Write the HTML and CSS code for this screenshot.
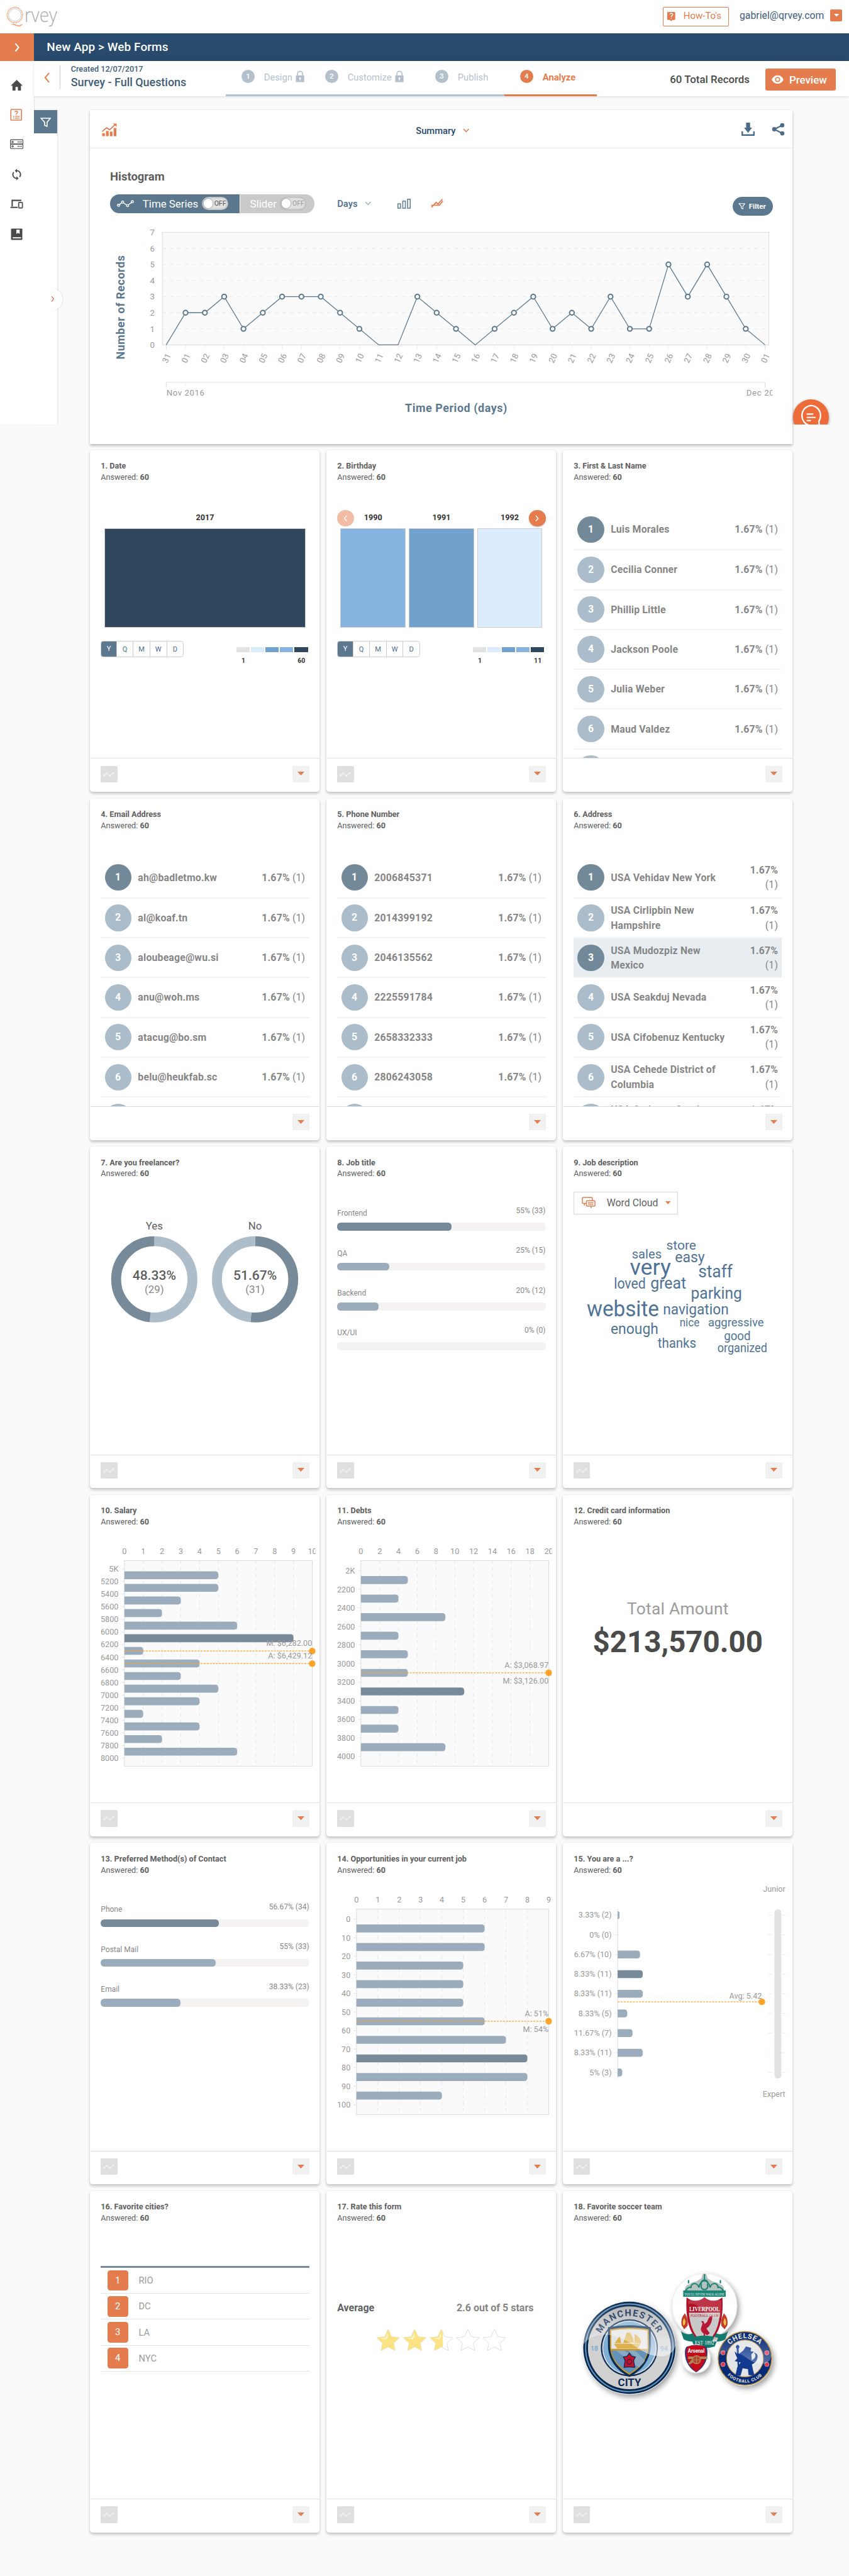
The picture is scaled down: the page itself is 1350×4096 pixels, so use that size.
FILE: index.html
```html
<!DOCTYPE html>
<html lang="en">
<head>
<meta charset="utf-8">
<title>Qrvey - Survey - Full Questions</title>
<link rel="stylesheet" href="styles.css">
</head>
<body>
<svg class="defs" width="0" height="0">
  <symbol id="i-spark" viewBox="0 0 26 11"><g fill="none" stroke="currentColor" stroke-width="1.3"><circle cx="2.3" cy="8" r="1.6"/><circle cx="8.5" cy="3.3" r="1.6"/><circle cx="16" cy="8.6" r="1.6"/><circle cx="23.2" cy="2.5" r="1.6"/><path d="M3.6 7 7.2 4.3M9.8 4.3l4.9 3.4M17 7.4l5.2-3.7"/></g></symbol>
  <symbol id="i-funnel" viewBox="0 0 17 15"><path d="M1.2 1h14.6L10.6 7.2v6.6L6.8 12V7.2z" fill="none" stroke="currentColor" stroke-width="1.6"/></symbol>
  <symbol id="i-down" viewBox="0 0 10 6"><path d="M0 0h10L5 5.4z" fill="currentColor"/></symbol>
  <symbol id="i-lock" viewBox="0 0 14 18"><path d="M3 8V5a4 4 0 0 1 8 0v3" fill="none" stroke="currentColor" stroke-width="1.6"/><path fill="currentColor" fill-rule="evenodd" d="M.5 7.5h13V18H.5zM7 10.6a1.4 1.4 0 0 0-.7 2.6v1.9h1.4v-1.9A1.4 1.4 0 0 0 7 10.600z"/></symbol>
</svg>

<header class="topbar">
  <svg class="logo" viewBox="0 0 90 50">
    <circle cx="22.400" cy="22.600" r="11.500" fill="none" stroke="#f3b48f" stroke-width="2.200" stroke-linecap="round" stroke-dasharray="0.01 2.570"/>
    <circle cx="22.400" cy="22.600" r="9.300" fill="none" stroke="#b3b8bd" stroke-width="1.300" stroke-linecap="round" stroke-dasharray="0.01 2.085"/>
    <path d="M17.500 36.600c4-1.600 6 1.400 9.500 1.600 3 .2 5-.6 7-2-1.500 2.600-4 3.700-7 3.400-3.500-.4-5.500-2.800-9.500-3z" fill="#f0a57c" stroke="#f0a57c" stroke-width=".6"/>
    <text x="37" y="33.500" class="logo-text" textLength="49" lengthAdjust="spacingAndGlyphs">rvey</text>
  </svg>
  <div class="account">
    <a class="howto">
      <svg viewBox="0 0 12 14"><path d="M1 0h10a1 1 0 0 1 1 1v10a1 1 0 0 1-1 1H8l-2 2-2-2H1a1 1 0 0 1-1-1V1a1 1 0 0 1 1-1z" fill="#e57c4d"/><path d="M4 3.700C4 1.600 8.200 1.600 8.200 4 8.200 5.500 6.100 5.700 6.100 7.700M6.100 8.900v1.400" fill="none" stroke="#fff" stroke-width="1.300"/></svg>
      <span>How-To's</span>
    </a>
    <span class="email">gabriel@qrvey.com</span>
    <span class="account-btn"><svg viewBox="0 0 10 6"><use href="#i-down"/></svg></span>
  </div>
</header>

<div class="shell">
  <aside class="sidebar">
    <div class="side-toggle"><svg viewBox="0 0 8 14"><path d="M1.300 1 6.300 7l-5 6" fill="none" stroke="#fff" stroke-width="1.900"/></svg></div>
    <nav class="side-nav">
      <a><svg viewBox="0 0 20 18"><path d="M10 1 1 9.800h2.600V17h4.600v-5.500h3.600V17h4.600V9.800H19z" fill="currentColor"/></svg></a>
      <a class="on"><svg viewBox="0 0 20 18"><rect x="1.200" y="1" width="16" height="16" rx="1" fill="none" stroke="currentColor" stroke-width="1.500"/><path d="M7.300 5c0-2 4-2 4 .2 0 1.300-1.900 1.400-1.900 2.900M9.400 8.700v1" fill="none" stroke="currentColor" stroke-width="1.300"/><path d="M4.500 11.500h2M7.500 11.500h7M4.500 14h2M7.500 14h7" stroke="currentColor" stroke-width="1.200"/></svg></a>
      <a><svg viewBox="0 0 20 18"><g fill="none" stroke="currentColor" stroke-width="1.100"><rect x=".6" y="2" width="18.800" height="6.700" rx="1.200"/><rect x=".6" y="8.700" width="18.800" height="6.700" rx="1.200"/><circle cx="3.800" cy="5.400" r="1.100"/><circle cx="3.800" cy="12" r="1.100"/></g><path d="M11 5.400h7M11 12h7" stroke="currentColor" stroke-width="1.600" stroke-dasharray=".8 .5"/></svg></a>
      <a><svg viewBox="0 0 20 20"><path d="M10 3.600a6.400 6.400 0 0 1 5 10.400M10 16.400A6.400 6.400 0 0 1 5 6" fill="none" stroke="currentColor" stroke-width="1.900"/><path d="M10.500.2v6.800L6.800 3.600zM9.500 13v6.800l3.700-3.400z" fill="currentColor"/></svg></a>
      <a><svg viewBox="0 0 20 18"><path d="M17 3.400H3.200v9.200M.6 14h10.800" fill="none" stroke="currentColor" stroke-width="2"/><rect x="13" y="6.500" width="5.600" height="8.300" rx=".8" fill="none" stroke="currentColor" stroke-width="1.600"/></svg></a>
      <a><svg viewBox="0 0 20 18"><path fill="currentColor" fill-rule="evenodd" d="M2.500.5h15a1 1 0 0 1 1 1v15a1 1 0 0 1-1 1h-15a1 1 0 0 1-1-1v-15a1 1 0 0 1 1-1zM9.500 2.200v6.300l2.500-1.700 2.500 1.700V2.200zM4 13.500v1.700h12.500v-1.700z"/></svg></a>
    </nav>
  </aside>

  <div class="main">
    <div class="crumbs">New App &gt; Web Forms</div>
    <div class="subhead">
      <svg class="back" viewBox="0 0 9 16"><path d="M7.500 1 1.800 8l5.700 7" fill="none" stroke="#e57c4d" stroke-width="1.900"/></svg>
      <div class="survey">
        <div class="created">Created 12/07/2017</div>
        <div class="survey-name">Survey - Full Questions</div>
      </div>
      <div class="steps">
        <div class="step s1"><b>1</b><span>Design</span><svg viewBox="0 0 14 18"><use href="#i-lock"/></svg></div>
        <div class="step s2"><b>2</b><span>Customize</span><svg viewBox="0 0 14 18"><use href="#i-lock"/></svg></div>
        <div class="step s3"><b>3</b><span>Publish</span></div>
        <div class="step s4 current"><b>4</b><span>Analyze</span></div>
      </div>
      <div class="total">60 Total Records</div>
      <div class="preview"><svg viewBox="0 0 18 14"><path fill="#fff" fill-rule="evenodd" d="M9 .8C13.500.8 17 4.200 17.700 7 17 9.800 13.500 13.200 9 13.200S1 9.800.3 7C1 4.200 4.500.8 9 .8zM9 3.200a3.800 3.800 0 1 0 0 7.600 3.800 3.800 0 0 0 0-7.600z"/><circle cx="9" cy="7" r="2.300" fill="#fff"/></svg><span>Preview</span></div>
    </div>

    <div class="workspace">
      <div class="filter-panel">
        <div class="filter-tab"><svg viewBox="0 0 17 15"><use href="#i-funnel"/></svg></div>
        <div class="drawer-grip"><svg viewBox="0 0 6 10"><path d="M1 1l3.200 4L1 9" fill="none" stroke="#e57c4d" stroke-width="1.300"/></svg></div>
      </div>

      <div class="content">
        <section class="histogram">
          <div class="h-head">
            <svg class="h-logo" viewBox="0 0 23 20"><path fill="#e57c4d" d="M.5 15h4v4.500h-4zM6.200 11.500h4v8h-4zM12 12.500h4v7h-4zM17.800 7h4v12.500h-4z"/><path d="M.5 12.500 7 6.800l4.700 3 7.800-7.300" fill="none" stroke="#e57c4d" stroke-width="1.700"/><path d="M16.500.5h5.700v5z" fill="#e57c4d"/></svg>
            <div class="h-view">Summary<svg viewBox="0 0 10 7"><path d="M1 1l4 4 4-4" fill="none" stroke="#e57c4d" stroke-width="1.500"/></svg></div>
            <div class="h-actions">
              <svg viewBox="0 0 20 20"><path fill="#4b6c88" d="M7 0h6v7.500h3L10 15.500 4 7.500h3z"/><path d="M1.200 13v5.700h17.600V13" fill="none" stroke="#4b6c88" stroke-width="2.300"/></svg>
              <svg viewBox="0 0 20 20"><g fill="#4b6c88"><circle cx="4" cy="10" r="3.300"/><circle cx="16" cy="4" r="3.200"/><circle cx="16" cy="16.200" r="3.200"/></g><path d="M16 4 4 10l12 6.200" fill="none" stroke="#4b6c88" stroke-width="2.100"/></svg>
            </div>
          </div>
          <h2>Histogram</h2>
          <div class="h-tools">
            <div class="pill">
              <div class="pill-a"><svg viewBox="0 0 26 11"><use href="#i-spark"/></svg><span>Time Series</span><i class="switch">OFF</i></div>
              <div class="pill-b"><span>Slider</span><i class="switch">OFF</i></div>
            </div>
            <div class="days">Days<svg viewBox="0 0 10 7"><path d="M1 1l4 4 4-4" fill="none" stroke="#a3b6c6" stroke-width="1.500"/></svg></div>
            <svg class="bars-ic" viewBox="0 0 20 15"><g fill="none" stroke="#5b7a91" stroke-width="1.400"><rect x=".7" y="7.700" width="3.900" height="6.600"/><rect x="8" y="3.600" width="3.900" height="10.700"/><rect x="15.300" y=".7" width="3.900" height="13.600"/></g></svg>
            <svg class="line-ic" viewBox="0 0 19 14"><path d="M1 13 8 5.500l3 2.500 6.500-7.300M.5 9.800h12.500l5.200-6.500" fill="none" stroke="#e57c4d" stroke-width="1.700"/></svg>
            <div class="filter-btn"><svg viewBox="0 0 17 15"><use href="#i-funnel"/></svg>Filter</div>
          </div>
          <svg class="h-chart" id="histogram" viewBox="136 330 1059 339"></svg>
        </section>
        <div class="cards" id="cards"></div>
      </div>
    </div>
  </div>
</div>

<div class="chat-clip"><div class="chat"><svg viewBox="0 0 54 54"><path d="M39.500 39.500H27a14 15 0 1 1 12-6.500z" fill="none" stroke="#fff" stroke-width="2.200"/><path d="M20.500 22.200h10M20.500 27.200h13.500M20.500 32h6.500" stroke="#fff" stroke-width="2"/></svg></div></div>

<svg class="defs" width="0" height="0">
  <symbol id="crests" viewBox="0 50 346 414">
    <defs>
      <linearGradient id="gloss" x1="0" y1="0" x2="0" y2="1"><stop offset="0" stop-color="#fff" stop-opacity="0"/><stop offset="1" stop-color="#fff" stop-opacity=".55"/></linearGradient>
      <linearGradient id="silver" x1="0" y1="0" x2="0" y2="1"><stop offset="0" stop-color="#aeb0b3"/><stop offset=".4" stop-color="#d2d2d3"/><stop offset="1" stop-color="#cfcfd0"/></linearGradient>
      <filter id="drop" x="-20%" y="-20%" width="150%" height="150%"><feDropShadow dx="3" dy="4" stdDeviation="4" flood-color="#000" flood-opacity=".38"/></filter>
      <path id="arc-man" d="M52.300 236a48 48 0 0 1 96 0"/>
      <path id="arc-che" d="M244 252a30.500 30.500 0 0 1 61 0"/>
      <path id="arc-fc" d="M238 252a36.500 36.500 0 0 0 73 0"/>
    </defs>
    <g filter="url(#drop)"><circle cx="100.300" cy="236.300" r="70" fill="#e9ebee"/></g>
    <circle cx="100.300" cy="236" r="69.500" fill="#04244b"/><circle cx="100.300" cy="236" r="66" fill="none" stroke="#6394ba" stroke-width="2"/>
    <circle cx="100.300" cy="236" r="62.500" fill="url(#silver)"/>
    <circle cx="100.300" cy="236" r="43" fill="#0c2c55"/><circle cx="100.300" cy="236" r="41" fill="#dfe3e8"/><circle cx="100.300" cy="236" r="39.500" fill="#80afd4"/>
    <path d="M68 205q32-6 64.500 0V232c0 24-16 40-32.200 48C84 272 68 256 68 232z" fill="#0c2c55"/>
    <path d="M71 208q29-5 58.500 0V232c0 21-14 36-29.200 44.500C85 268 71 253 71 232z" fill="#c9992d"/>
    <path d="M73 210q27-4.500 54.500 0v27.500H73z" fill="#e4e4e6"/>
    <path d="M73.500 240h53.500c-1.500 15-13 26.500-26.700 34.500C87 266 75 255 73.500 240z" fill="#6292b9"/>
    <path d="M80 240h12l30 18-7 8zM98 240h11l15 15-3 5z" fill="#9bb3ca" opacity=".7"/>
    <path d="M77 230h40l-4 7H82zM86 218l-8 11h10zM96 213l-5 16 16-1q-1-9-6-15zM108 215v14h10q0-8-10-14z" fill="#ddb04a"/>
    <path d="M100.300 244l3.500 4.800 5.500 1-2.600 5.200 1.600 10.500-8-.8-8 .8 1.600-10.500-2.600-5.200 5.500-1z" fill="#c4142c" stroke="#14234a" stroke-width="1.200"/><circle cx="100.300" cy="257" r="3.600" fill="none" stroke="#14234a"/>
    <text class="crest-man"><textPath href="#arc-man" startOffset="50%" text-anchor="middle">MANCHESTER</textPath></text>
    <text class="crest-city" x="100.500" y="293.500" text-anchor="middle">CITY</text>
    <text class="crest-yr" x="47.500" y="240.500" text-anchor="middle">18</text><text class="crest-yr" x="152.500" y="240.500" text-anchor="middle">94</text>
    <path d="M31 231a69.500 69.500 0 0 1 139 0c-2 14-15 20-32 17-22-4-35-24-60-30-22-5-40 2-47 13z" fill="url(#gloss)"/>

    <g filter="url(#drop)"><circle cx="213.500" cy="172.800" r="48.800" fill="#fff" stroke="#ebebeb"/></g>
    <path d="M184 152v-5q1-6 7-7 3-3 10-4l8-5q1-7 4.500-7t4.500 7l8 5q7 1 10 4 6 1 7 7v5z" fill="#b5c2bd"/><path d="M184 151c4-6 8-8 9-5 0-9 10-9 12-1 2-8 5-10 8.500-10s6.500 2 8.500 10c2-8 12-8 12 1 1-3 5-1 9 5M213.500 125v9M189.500 139v-5M237.500 139v-5M209 141a5 5 0 1 1 9 0 5 5 0 1 1-9 0" fill="none" stroke="#1b8476" stroke-width="2"/>
    <rect x="181.500" y="149.500" width="64" height="9.500" fill="#1b8476"/>
    <text class="crest-ynwa" x="213.500" y="156.800" text-anchor="middle" textLength="60" lengthAdjust="spacingAndGlyphs">YOU'LL NEVER WALK ALONE</text>
    <path d="M186.500 160q6 5 13 5 9 0 14-5.500 5 5.500 14 5.500 7 0 13-5c2 35-5 60-27 73-22-13-29-38-27-73z" fill="#b30f26"/>
    <path d="M190 183h47c-2 21-8 37-23.500 47C198 220 192 204 190 183z" fill="#c9c9ca"/>
    <path d="M213.500 200l4-3q2-8 8-10 0 14-9 20l5 7-4 3-3-2v11h-4l2-11q-7-5-3-12l1-4-2-3q4-2 5 4z" fill="#b81733"/>
    <text class="crest-liv" x="213.500" y="180.500" text-anchor="middle" textLength="46" lengthAdjust="spacingAndGlyphs">LIVERPOOL</text>
    <text class="crest-lfc" x="213.500" y="189.500" text-anchor="middle" textLength="42" lengthAdjust="spacingAndGlyphs">FOOTBALL CLUB</text>
    <path d="M184 184q-7 8-5 18l4 6 5-5q2-9-4-19zM243 184q7 8 5 18l-4 6-5-5q-2-9 4-19z" fill="#c23a2a"/><path d="M183 191q-4 6-1 12 5-4 1-12zM244 191q4 6 1 12-5-4-1-12z" fill="#f0c349"/>
    <path d="M178 211q9 7 18 3l6 12q-12 2-20-3zM249 211q-9 7-18 3l-6 12q12 2 20-3zM193 221q20-7 41 0l-5 13q-15 5-31 0z" fill="#157a6e"/>
    <text class="crest-est" x="213.500" y="231.500" text-anchor="middle">EST·1892</text>
    <path d="M189 165q24-10 50 0l-1 25q-6 5-14 0-12-8-18-15-8-7-17-5z" fill="#fff" opacity=".16"/>

    <g filter="url(#drop)"><circle cx="201" cy="252.500" r="21.300" fill="#fff" stroke="#ececec"/></g>
    <path d="M188 234q13-5 26 0 4 0 4 10c0 14-8 24-17 29-9-5-17-15-17-29 0-10 4-10 4-10z" fill="#283a78"/>
    <path d="M189 234q12-4 24 0 3 2 3 10c0 13-7 23-15 28-8-5-15-15-15-28 0-8 3-10 3-10z" fill="#c60a1c"/>
    <path d="M189 249h29v4h-15l-11 8-3-1 6-7h-6z" fill="#a98e57"/><circle cx="201.500" cy="254" r="6" fill="#b8402f" stroke="#a98e57" stroke-width="1.500"/><path d="M195.500 254h12M201.500 248v12" stroke="#a98e57"/>
    <text class="crest-ars" x="201" y="243.500" text-anchor="middle" textLength="25" lengthAdjust="spacingAndGlyphs">Arsenal</text>

    <g filter="url(#drop)"><circle cx="274.500" cy="252.300" r="41.200" fill="#eceff2"/></g>
    <circle cx="274.500" cy="252" r="40.300" fill="#052b78" stroke="#b5862c" stroke-width="1.400"/>
    <circle cx="274.500" cy="252" r="27.800" fill="#e3e4e7" stroke="#b5862c"/>
    <path d="M272 240l4-6 8 2-1 5 5 1-4 4 1 9q9-6 3-12 8 2 5 10-2 6-8 8l2 10 2 7-9-1-1-9-8-1-3 11h-8l3-13 5-7-9-2 4-4-3-7-1-4q3 2 4 6zM262 237a2.500 3 0 1 1 3 0l1 34h-2z" fill="#123a8f"/>
    <g fill="#e03a4e" stroke="#f1a7b0" stroke-width=".7"><circle cx="241.500" cy="243.500" r="3.300"/><circle cx="307.500" cy="243.500" r="3.300"/><circle cx="241.500" cy="261" r="3.300"/><circle cx="307.500" cy="261" r="3.300"/></g>
    <text class="crest-che"><textPath href="#arc-che" startOffset="50%" text-anchor="middle">CHELSEA</textPath></text>
    <text class="crest-cfc"><textPath href="#arc-fc" startOffset="50%" text-anchor="middle">FOOTBALL CLUB</textPath></text>
    <path d="M234.500 248a40.300 40.300 0 0 1 80 0c-2 10-10 14-20 12-14-3-20-14-34-17-12-3-22-1-26 5z" fill="url(#gloss)" opacity=".6"/>
  </symbol>
</svg>
<script src="app.js"></script>
</body>
</html>
```
FILE: styles.css
```css
/* 1rem = 10 design pixels */
html { font-size: 10.546875px; }
* { box-sizing: border-box; }
body { margin: 0; height: 4096px; overflow: hidden; position: relative; background: #fafafa; color: #606060; font-family: Roboto, "Liberation Sans", sans-serif; font-size: 1.2rem; }
svg { display: block; flex: none; }
svg text { font-family: Roboto, "Liberation Sans", sans-serif; }
.defs { position: absolute; top: 0; left: 0; }

.topbar { height: 5rem; background: #fff; display: flex; justify-content: space-between; align-items: flex-start; }
.logo { width: 9rem; height: 5rem; }
svg .logo-text { font-family: "Open Sans", sans-serif; font-weight: 300; font-size: 30px; fill: #a9a9a9; }
.account { display: flex; padding: 1rem 1rem 0 0; }
.howto { width: 10rem; height: 3rem; border: 1.5px solid #e57c4d; border-radius: 2px; color: #e57c4d; display: flex; align-items: center; gap: 1.2rem; padding: 0 0 .2rem .65rem; font-size: 1.42rem; white-space: nowrap; }
.howto svg { width: 1.2rem; height: 1.4rem; margin-top: .2rem; }
.email { margin-left: 1.6rem; width: 12.9rem; margin-right: .8rem; font-size: 1.5rem; line-height: 2.6rem; color: #3d5b78; white-space: nowrap; }
.account-btn { margin-top: .4rem; width: 1.8rem; height: 1.8rem; border-radius: 2px; background: #e57c4d; color: #fff; display: flex; align-items: center; justify-content: center; }
.account-btn svg { width: .8rem; height: .48rem; }

.shell { display: flex; align-items: flex-start; }
.sidebar { width: 5.1rem; height: 59rem; background: #fff; box-shadow: 1px 0 1px rgba(0,0,0,.08); }
.side-toggle { height: 4.2rem; background: #e57c4d; display: flex; align-items: center; justify-content: center; }
.side-toggle svg { width: .8rem; height: 1.4rem; }
.side-nav { padding-top: 1.35rem; }
.side-nav a { height: 4.5rem; display: flex; align-items: center; justify-content: center; color: #4a4a4a; }
.side-nav a.on { color: #e57c4d; }
.side-nav svg { width: 2rem; height: 1.8rem; }

.main { flex: 1; min-width: 0; }
.crumbs { height: 4.2rem; background: #274a6d; color: #fff; font-size: 1.8rem; font-weight: 500; line-height: 4.2rem; padding-left: 1.95rem; letter-spacing: .005em; }
.subhead { height: 5.3rem; background: #fff; box-shadow: 0 1px 4px rgba(0,0,0,.12); display: flex; align-items: flex-start; position: relative; }
.back { width: .9rem; height: 1.6rem; margin: 1.7rem 0 0 1.5rem; }
.survey { margin: .7rem 0 0 1.5rem; width: 25rem; height: 3.6rem; border-left: 1px solid #ccc; padding-left: 1.6rem; color: #3f5d78; white-space: nowrap; }
.created { font-size: 1.2rem; font-weight: 500; line-height: 1.4rem; margin-top: -.1rem; }
.survey-name { font-size: 1.7rem; font-weight: 500; line-height: 2.4rem; }
.steps { display: flex; height: 5.3rem; }
.step { display: flex; align-items: center; height: 100%; padding: 0 0 .3rem 2.4rem; border-bottom: .3rem solid #b4c2cd; color: #b4c1cd; font-size: 1.4rem; }
.step b { width: 2rem; height: 2rem; border-radius: 50%; background: #b4c1cd; color: #fff; font-size: 1.1rem; font-weight: 500; line-height: 2rem; text-align: center; margin-right: 1.4rem; }
.step span { padding-top: .3rem; }
.step svg { width: 1.35rem; height: 1.8rem; margin-left: .5rem; }
.s1 { width: 12.6rem; } .s2 { width: 16.6rem; } .s3 { width: 12.8rem; } .s4 { width: 14rem; }
.step.current { color: #e57c4d; border-color: #e57c4d; font-weight: 700; }
.step.current b { background: #e57c4d; }
.total { width: 14.3rem; margin: 1.7rem 0 0 11rem; font-size: 1.6rem; font-weight: 500; line-height: 2.2rem; color: #4a4a4a; white-space: nowrap; }
.preview { margin: 1.1rem 0 0 .1rem; width: 10.6rem; height: 3.4rem; border-radius: 3px; background: #e57c4d; color: #fff; font-size: 1.6rem; font-weight: 500; display: flex; align-items: center; padding-left: .9rem; gap: .9rem; }
.preview svg { width: 1.8rem; height: 1.4rem; }

.workspace { display: flex; align-items: flex-start; padding-top: 2.1rem; }
.filter-panel { width: 3.5rem; height: 47.4rem; background: #fff; box-shadow: 1px 0 2px rgba(0,0,0,.1); position: relative; }
.filter-tab { height: 3.5rem; background: #5b788f; color: #fff; display: flex; align-items: center; justify-content: center; }
.filter-tab svg { width: 1.65rem; height: 1.45rem; margin-top: .3rem; }
.drawer-grip { position: absolute; left: 1.9rem; top: 26.8rem; width: 2.4rem; height: 3.4rem; background: #fff; border-radius: 0 2rem 2rem 0; box-shadow: 2px 0 2px rgba(0,0,0,.06); display: flex; align-items: center; padding-left: .7rem; }
.drawer-grip svg { width: .6rem; height: 1rem; }

.content { width: 105.9rem; margin-left: 5rem; }
.histogram { height: 50.3rem; background: #fff; box-shadow: 0 3px 4px rgba(0,0,0,.22), 0 0 3px rgba(0,0,0,.08); margin-bottom: 1rem; overflow: hidden; }
.h-head { height: 5.8rem; border-bottom: 1px solid #ececec; display: flex; justify-content: space-between; align-items: center; padding: 0 1.2rem 0 1.8rem; }
.h-logo { width: 2.3rem; height: 2rem; margin-top: .3rem; }
.h-view { display: flex; align-items: center; gap: 1.1rem; color: #274a6d; font-size: 1.4rem; font-weight: 500; padding-left: 4rem; margin-top: .5rem; }
.h-view svg { width: 1rem; height: .7rem; }
.h-actions { display: flex; gap: 2.5rem; }
.h-actions svg { width: 2rem; height: 2rem; }
.histogram h2 { margin: 3.2rem 0 0 3rem; font-size: 1.75rem; line-height: 2.2rem; font-weight: 700; color: #5c5c5c; }
.h-tools { display: flex; align-items: center; height: 3.6rem; margin-top: 1.1rem; padding-left: 3rem; }
.pill { display: flex; gap: 1px; color: #fff; font-size: 1.6rem; height: 2.8rem; border-radius: 1.4rem; overflow: hidden; }
.pill-a { width: 19.5rem; background: #5b788f; display: flex; align-items: center; padding-left: 1rem; }
.pill-a svg { width: 2.6rem; height: 1.1rem; margin-right: 1.3rem; }
.pill-a span { width: 8.9rem; white-space: nowrap; }
.pill-b { width: 11.25rem; background: #cacaca; display: flex; align-items: center; padding-left: 1.5rem; }
.pill-b span { width: 4.5rem; }
.switch { width: 4rem; height: 2rem; border-radius: 1rem; background: radial-gradient(circle at .95rem 50%, #fff .68rem, #aaa .73rem, #e0e0e0 .83rem); box-shadow: inset 0 0 .3rem rgba(0,0,0,.45); font-style: normal; font-size: 1rem; line-height: 2.1rem; color: #555; padding-left: 1.9rem; }
.pill-b .switch { color: #999; }
.days { margin-left: 3.4rem; width: 9.1rem; display: flex; align-items: center; gap: 1.1rem; font-size: 1.4rem; color: #4b6c88; font-weight: 500; }
.days svg { width: 1rem; height: .7rem; }
.bars-ic { width: 2rem; height: 1.5rem; }
.line-ic { width: 1.9rem; height: 1.4rem; margin-left: 3rem; }
.filter-btn { margin: .8rem 3rem 0 auto; width: 6rem; height: 2.9rem; border-radius: 1.45rem; background: #5b788f; color: #fff; font-size: 1.1rem; font-weight: 700; display: flex; align-items: center; gap: .5rem; padding-left: .8rem; }
.filter-btn svg { width: 1.1rem; height: .95rem; }
.h-chart { width: 105.9rem; height: 33.9rem; margin-top: .5rem; }
.h-chart text { font-size: 12.5px; fill: #999; }
.h-chart .axis-title { font-size: 17px; font-weight: 700; fill: #5b788f; }

.cards { display: grid; grid-template-columns: repeat(3, 1fr); column-gap: 1.03rem; row-gap: .985rem; }
.card { height: 51.5rem; background: #fff; border-radius: .4rem; box-shadow: 0 3px 4px rgba(0,0,0,.2), 0 0 3px rgba(0,0,0,.08); display: flex; flex-direction: column; }
.card-head { height: 5rem; flex: none; padding: 1.55rem 1.6rem 0; font-size: 1.2rem; line-height: 1.7rem; color: #606060; }
.card-head div:first-child, .card-head b { font-weight: 700; }
.card-body { height: 41.4rem; flex: none; overflow: hidden; }
.card-foot { flex: 1; margin: 0 1px; border-top: 1px solid #ddd; padding: 1.05rem 1.5rem 0; display: flex; justify-content: flex-end; }
.foot-btn { width: 2.5rem; height: 2.5rem; border-radius: 2px; background: #f1f1f1; color: #e57c4d; display: flex; align-items: center; justify-content: center; }
.foot-btn svg { width: 1.05rem; height: .63rem; }
.foot-btn.spark { background: #dfdfdf; color: #fff; margin-right: auto; }
.foot-btn.spark svg { width: 1.7rem; height: .8rem; opacity: .85; }
.plot { width: 34.6rem; height: 41.4rem; }
.plot text { font-size: 12px; fill: #999; }

.heat { padding-top: 4.4rem; position: relative; }
.heat-cells { display: flex; gap: .5rem; margin: 0 2.1rem; }
.heat-cells div { flex: 1; text-align: center; font-weight: 700; line-height: 1.6rem; color: #333; }
.heat-cells i { display: block; height: 15rem; margin-top: .7rem; border: 1px solid #ccc; }
.heat-nav { position: absolute; top: 4rem; width: 2.5rem; height: 2.5rem; border-radius: 50%; background: #e57c4d; display: flex; align-items: center; justify-content: center; box-shadow: 0 1px 3px rgba(0,0,0,.25); }
.heat-nav svg { width: .6rem; height: 1rem; }
.heat-nav.prev { left: 1.6rem; background: #f3bca4; box-shadow: none; }
.heat-nav.next { right: 1.6rem; }
.heat-nav.prev svg { transform: scaleX(-1); }
.heat-foot { display: flex; justify-content: space-between; padding: 2rem 1.8rem 0 1.6rem; }
.periods { display: flex; width: 12.5rem; height: 2.5rem; border: 1px solid #ccc; border-radius: .4rem; overflow: hidden; font-size: 1.05rem; color: #4b6c88; }
.periods span { flex: 1; text-align: center; line-height: 2.4rem; border-left: 1px solid #ccc; }
.periods span:first-child { border: 0; background: #5b788f; color: #fff; margin: -1px; }
.legend { width: 10.8rem; padding-top: 1rem; }
.swatches { display: flex; gap: .2rem; }
.swatches i { flex: 1; height: .7rem; }
.legend p { margin: .8rem 0 0; padding: 0 .4rem 0 .8rem; display: flex; justify-content: space-between; font-size: 1rem; line-height: 1.2rem; font-weight: 700; color: #333; }

.ranks { padding: 3.9rem 1.6rem 0; font-size: 1.5rem; letter-spacing: .012em; color: #858585; }
.rank { height: 6rem; border-bottom: .2rem solid #f3f3f3; display: flex; align-items: center; line-height: 2.2rem; padding: 0 .6rem; }
.rank:first-child { height: 6.2rem; }
.rank > i { width: 4rem; height: 4rem; flex: none; border-radius: 50%; background: #abbdca; color: #fff; font-style: normal; font-weight: 700; line-height: 4rem; text-align: center; margin-right: 1rem; }
.rank > i.top { background: #728999; }
.rank.hover { background: #e8edf1; }
.rank .name { flex: 1; font-weight: 700; }
.rank .pct { text-align: right; }
.wrap .pct { width: 4.8rem; margin-left: 1.8rem; }

.meters { padding: 4.1rem 1.6rem 0; font-size: 1.14rem; color: #888; }
.meter { height: 6rem; }
.meter p { margin: 0; height: 2.4rem; display: flex; justify-content: space-between; line-height: 1.3rem; }
.meter p span:first-child { padding-top: .4rem; }
.track { height: 1.2rem; border-radius: .5rem; background: #f4f3f2; overflow: hidden; }
.track i { display: block; height: 100%; border-radius: .5rem; background: #9badbc; }
.track i.max { background: #778a99; }

.cloud-select { margin: 1.8rem 0 0 1.6rem; width: 15.7rem; height: 3.4rem; border: 1px solid #d8d8d8; display: flex; align-items: center; padding: 0 1rem 0 1.1rem; font-size: 1.5rem; color: #606060; }
.cloud-select svg:first-child { width: 2.1rem; height: 1.8rem; margin-right: 1.7rem; }
.cloud-select svg:last-child { width: .8rem; height: .5rem; margin-left: auto; color: #e57c4d; }
.cloud { width: 34.6rem; height: 36.2rem; }
.cloud text { fill: #4f7397; }

.plot .donut-name { font-size: 16px; fill: #606060; }
.plot .donut-pct { font-size: 20px; font-weight: 500; fill: #5c5c5c; }
.plot .donut-n { font-size: 16px; fill: #888; }

.amount { padding-top: 10.700rem; text-align: center; }
.amount p { margin: 0; font-size: 2.5rem; line-height: 3.200rem; color: #9b9b9b; letter-spacing: .01em; }
.amount strong { display: block; font-size: 4.5rem; line-height: 6rem; margin-top: .4rem; color: #4a4a4a; font-weight: 700; }

.cities { margin: 6.3rem 1.6rem 0; border-top: .3rem solid #778a99; font-size: 1.4rem; color: #9b9b9b; }
.cities div { height: 3.91rem; border-bottom: 1px solid #e4e4e4; display: flex; align-items: center; padding-left: 1rem; }
.cities i { width: 3.1rem; height: 3.1rem; border-radius: .4rem; background: #e57c4d; color: #fff; font-style: normal; line-height: 3.1rem; text-align: center; margin-right: 1.6rem; }
.rating { padding: 11.6rem 3.400rem 0 1.6rem; display: flex; justify-content: space-between; font-size: 1.52rem; line-height: 2rem; font-weight: 700; color: #606060; }
.rating span:last-child { color: #858585; }
.stars { width: 19.6rem; height: 3.3rem; margin: 2.2rem auto 0; }

svg .crest-man { font-size: 14px; font-weight: 700; fill: #0c2c55; letter-spacing: 1.4px; }
svg .crest-city { font-size: 16px; font-weight: 700; fill: #0c2c55; }
svg .crest-yr { font-size: 10px; font-weight: 700; fill: #7dabd0; }
svg .crest-ynwa { font-family: "Liberation Serif", serif; font-size: 6.5px; fill: #e3f0ee; }
svg .crest-liv { font-family: "Liberation Serif", serif; font-size: 10px; font-weight: 700; fill: #fff; }
svg .crest-lfc { font-family: "Liberation Serif", serif; font-size: 6px; fill: #b30f26; }
svg .crest-est { font-family: "Liberation Serif", serif; font-size: 7px; fill: #fff; }
svg .crest-ars { font-size: 8px; font-weight: 700; fill: #fff; }
svg .crest-che { font-size: 10.5px; font-weight: 700; fill: #efe6d3; letter-spacing: .8px; }
svg .crest-cfc { font-size: 6.5px; font-weight: 700; fill: #efe6d3; letter-spacing: .7px; }

/* chat launcher, cut by the fold of the first screen */
.chat-clip { position: absolute; left: 118.6rem; top: 59.4rem; width: 7.4rem; height: 4.6rem; overflow: hidden; }
.chat { margin: .8rem 0 0 1rem; width: 5.400rem; height: 5.400rem; border-radius: 50%; background: #ee6c3a; box-shadow: 0 2px 5px rgba(0,0,0,.4); }
```
FILE: app.js
```js
const DARK = '#778a99', SOFT = '#9badbc', ORANGE = '#ffa428';
const svgText = (x, y, s, attrs = '') => `<text x="${x}" y="${y}" ${attrs}>${s}</text>`;

/* ---- histogram ---- */
(function () {
  const values = [0,2,2,3,1,2,3,3,3,2,1,0,0,3,2,1,0,1,2,3,1,2,1,3,1,1,5,3,5,3,1,0];
  const X = i => 251 + i * 29.125, Y = v => 520 - v * 24.24;
  let s = '<rect x="245.3" y="350.3" width="914.200" height="169.700" fill="#fafafa" stroke="#ddd"/>';
  for (let v = 0; v <= 7; v++) {
    if (v > 0 && v < 7) s += `<path d="M245 ${Y(v)}H1159" stroke="#ececec" stroke-width="1.200" stroke-dasharray="5.500 5.800"/>`;
    s += svgText(233.5, Y(v) + 4.5, v, 'text-anchor="end"');
  }
  values.forEach((v, i) => {
    const edge = i === 0 || i === values.length - 1;
    s += `<path d="M${X(i)} 520v${edge ? 7 : 5.5}" stroke="${edge ? '#ddd' : '#ececec'}"/>`;
    const label = i === 0 ? '31' : String(i === 31 ? 1 : i).padStart(2, '0');
    s += svgText(0, 4.3, label, `text-anchor="middle" transform="translate(${X(i) + 0.5} 540.200) rotate(-65)"`);
  });
  s += `<polyline points="${values.map((v, i) => X(i) + ',' + Y(v)).join(' ')}" fill="none" stroke="#5b788f" stroke-width="1.200"/>`;
  values.forEach((v, i) => { if (v) s += `<circle cx="${X(i)}" cy="${Y(v)}" r="3.500" fill="#fff" stroke="#5b788f" stroke-width="1.900"/>`; });
  s += '<path d="M251 583.500v-7H1153.900v7" fill="none" stroke="#ddd"/><path d="M280 577v5.500" stroke="#ececec"/>';
  s += svgText(251.500, 596.700, 'Nov 2016', 'textLength="57"');
  s += '<svg x="1120" y="580" width="45.200" height="30" viewBox="1120 580 45.200 30">' + svgText(1125.700, 596.700, 'Dec 2016', 'textLength="57"') + '</svg>';
  s += svgText(688, 621.5, 'Time Period (days)', 'class="axis-title" text-anchor="middle" textLength="154"');
  s += svgText(0, 0, 'Number of Records', 'class="axis-title" text-anchor="middle" textLength="157" transform="translate(188.500 463.500) rotate(-90)"');
  document.getElementById('histogram').innerHTML = s;
})();

/* ---- card bodies ---- */
const ranks = (names, opt = {}) => `<div class="ranks ${opt.wrap ? 'wrap' : ''}">` + names.map((n, i) =>
  `<div class="rank ${opt.hover === i ? 'hover' : ''}"><i class="${i === 0 || opt.hover === i ? 'top' : ''}">${i + 1}</i><span class="name">${n}</span><span class="pct"><b>1.67%</b> (1)</span></div>`).join('') + '</div>';

const meters = rows => '<div class="meters">' + rows.map(([n, p, c], i) =>
  `<div class="meter"><p><span>${n}</span><span>${p}% (${c})</span></p><div class="track"><i class="${i ? '' : 'max'}" style="width:${p}%"></i></div></div>`).join('') + '</div>';

const arrow = '<svg viewBox="0 0 6 10"><path d="M1 1l3.500 4L1 9" fill="none" stroke="#fff" stroke-width="1.300"/></svg>';
const heat = (cells, max, nav) => `<div class="heat">${nav ? `<span class="heat-nav prev">${arrow}</span><span class="heat-nav next">${arrow}</span>` : ''}
  <div class="heat-cells">${cells.map(([y, c]) => `<div>${y}<i style="background:${c}"></i></div>`).join('')}</div>
  <div class="heat-foot"><div class="periods"><span>Y</span><span>Q</span><span>M</span><span>W</span><span>D</span></div>
  <div class="legend"><div class="swatches">${['#e2e2e2', '#daecfd', '#71a1cd', '#85b4e0', '#31475d'].map(c => `<i style="background:${c}"></i>`).join('')}</div><p><span>1</span><span>${max}</span></p></div></div></div>`;

const plot = inner => `<svg class="plot" viewBox="0 50 346 414">${inner}</svg>`;
const rightRound = (x, y, w, h, r, fill) => { r = Math.min(r, w); return `<path d="M${x} ${y}h${w - r}q${r} 0 ${r} ${r}v${h - 2 * r}q0 ${r} ${-r} ${r}h${r - w}z" fill="${fill}"/>`; };
const marker = (x0, x1, y) => `<path d="M${x0} ${y}H${x1}" stroke="${ORANGE}" stroke-width="1.200" stroke-dasharray="3 1.600"/><circle cx="${x1}" cy="${y}" r="5" fill="${ORANGE}"/>`;

function bars(o) {
  const left = o.left, right = 335.2, top = 99.8, bottom = 409.7;
  const n = o.ticks.length - 1, unit = (right - left) / n;
  let s = `<rect x="${left}" y="${top}" width="${right - left}" height="${bottom - top}" fill="#fafafa" stroke="#ddd"/>`;
  o.ticks.forEach((t, i) => {
    const x = left + i * unit;
    if (i && i < n) s += `<path d="M${x} ${top}V${bottom}" stroke="#e8e8e8" stroke-dasharray="5 5"/>`;
    s += svgText(x, 90, t, 'text-anchor="middle"');
  });
  o.labels.forEach((t, i) => {
    const y = o.start + i * o.pitch;
    s += `<path d="M${left - 4.500} ${y}h4.500" stroke="#e4e4e4"/>` + svgText(left - 9, y + 4.3, t, 'text-anchor="end"');
  });
  const max = Math.max(...o.values);
  o.values.forEach((v, i) => {
    s += rightRound(left, o.start + (i + .5) * o.pitch - 6, v / o.ticks[n] * (right - left), 12, 4.5, v === max && o.values.indexOf(v) === i ? DARK : SOFT);
  });
  o.lines.forEach(y => s += marker(left, right, y));
  o.notes.forEach(([t, y]) => s += svgText(335, y, t, 'text-anchor="end"'));
  return `<svg class="plot" viewBox="0 50 346 414"><svg x="0" y="50" width="340" height="414" viewBox="0 50 340 414">${s}</svg></svg>`;
}

function donut(cx, name, pct, n, first, second) {
  const r = 57.5, c = 2 * Math.PI * r, split = .5167 * c;
  const ring = (color, len, off) => `<circle cx="${cx}" cy="200" r="${r}" fill="none" stroke="${color}" stroke-width="15" stroke-dasharray="${len} ${c}" stroke-dashoffset="${-off}" transform="rotate(-90 ${cx} 200)"/>`;
  return ring(first, split, 0) + ring(second, c - split, split) +
    svgText(cx, 125, name, 'class="donut-name" text-anchor="middle"') +
    svgText(cx, 200.500, pct, 'class="donut-pct" text-anchor="middle"') +
    svgText(cx, 220.300, n, 'class="donut-n" text-anchor="middle"');
}

function cloud() {
  /* word, x, baseline, width, size */
  const words = [['sales',104,168,45,19],['store',156,155,45,20],['very',101,193,62,33],['easy',169,174,45,22],['staff',204,197,52,26],
    ['loved',77,214,48,23],['great',132,214,54,24],['parking',193,229,77,24],['website',36,256,109,33],['navigation',151,253,99,23],
    ['enough',72,282,72,23],['nice',176,271,30,18],['aggressive',219,271,84,18],['thanks',143,303,58,21],['good',243,292,40,19],['organized',233,310,75,19]];
  return `<div class="cloud-select"><svg viewBox="0 0 21 18"><g fill="none" stroke="#e57c4d" stroke-width="1.400"><rect x="1" y="1" width="15" height="9" rx="1"/><rect x="7" y="6" width="13" height="8" rx="1" fill="#fff"/><path d="M4 10v3M9.500 9h8M9.500 11.500h8M14 14v3"/></g></svg>Word Cloud<svg viewBox="0 0 10 6"><use href="#i-down"/></svg></div>` +
    `<svg class="cloud" viewBox="0 102 346 362">${words.map(([w, x, y, l, z]) => svgText(x, y, w, `font-size="${z}" textLength="${l}" lengthAdjust="spacingAndGlyphs"`)).join('')}</svg>`;
}

function scale() {
  const rows = [['3.33% (2)',2.8],['0% (0)',0],['6.67% (10)',33.8],['8.33% (11)',37.9],['8.33% (11)',37.9],['8.33% (5)',14.5],['11.67% (7)',22.5],['8.33% (11)',37.9],['5% (3)',7]];
  let s = svgText(335.400, 73.400, 'Junior', 'text-anchor="end"') + svgText(335.400, 383, 'Expert', 'text-anchor="end"') +
    '<path d="M82.600 100v255" stroke="#ddd"/><rect x="319" y="100" width="10.300" height="255" rx="5" fill="#e1e1e1"/>';
  rows.forEach(([t, w], i) => {
    const y = 109 + i * 29.64;
    s += `<path d="M78 ${y}h4.500M310 ${y}h5M330.500 ${y}h5" stroke="#e8e8e8"/>` + svgText(73.600, y + 4, t, 'text-anchor="end"');
    if (w) s += rightRound(82.6, y - 6, w, 12, 4.5, i === 3 ? DARK : SOFT);
  });
  return plot(s + marker(82.6, 300, 239.7) + svgText(300, 235, 'Avg: 5.42', 'text-anchor="end"'));
}

function stars() {
  const star = 'M17.500 0l5.300 11.600 12.200 1.500-9 8.500 2.400 11.400-10.900-5.700L6.600 33 9 21.600 0 13.100l12.200-1.500z';
  let s = '<clipPath id="half"><rect width="20" height="33"/></clipPath>';
  for (let i = 0; i < 5; i++) s += `<g transform="translate(${i * 40.1} .5) scale(.98)"><path d="${star}" fill="#fff" stroke="#ddd" stroke-width=".9"/>${i < 3 ? `<g ${i === 2 ? 'clip-path="url(#half)"' : ''}><path d="${star}" fill="#fbe384"/><path d="M5 14.500 13.500 13 17 6l.5 6-3 4z" fill="#fff" opacity=".6"/></g>` : ''}</g>`;
  return `<svg class="stars" viewBox="0 0 196 33">${s}</svg>`;
}

const seq = (a, b, step) => { const r = []; for (let i = a; i <= b; i += step) r.push(i); return r; };
const cards = [
  ['1. Date', heat([['2017', '#31475d']], 60), 1],
  ['2. Birthday', heat([['1990', '#85b4e0'], ['1991', '#71a1cd'], ['1992', '#daecfd']], 11, true), 1],
  ['3. First &amp; Last Name', ranks(['Luis Morales', 'Cecilia Conner', 'Phillip Little', 'Jackson Poole', 'Julia Weber', 'Maud Valdez', ' ']), 0],
  ['4. Email Address', ranks(['ah@badletmo.kw', 'al@koaf.tn', 'aloubeage@wu.si', 'anu@woh.ms', 'atacug@bo.sm', 'belu@heukfab.sc', ' ']), 0],
  ['5. Phone Number', ranks(['2006845371', '2014399192', '2046135562', '2225591784', '2658332333', '2806243058', ' ']), 0],
  ['6. Address', ranks(['USA Vehidav New York', 'USA Cirlipbin New Hampshire', 'USA Mudozpiz New Mexico', 'USA Seakduj Nevada', 'USA Cifobenuz Kentucky', 'USA Cehede District of Columbia', 'USA Codepes South Carolina'], { wrap: true, hover: 2 }), 0],
  ['7. Are you freelancer?', plot(donut(97, 'Yes', '48.33%', '(29)', '#aebdca', DARK) + donut(249, 'No', '51.67%', '(31)', DARK, '#aebdca')), 1],
  ['8. Job title', meters([['Frontend', 55, 33], ['QA', 25, 15], ['Backend', 20, 12], ['UX/UI', 0, 0]]), 1],
  ['9. Job description', cloud(), 1],
  ['10. Salary', bars({ left: 52, ticks: seq(0, 10, 1), labels: ['5K', ...seq(5200, 8000, 200)], start: 112.3, pitch: 19, values: [5,5,3,2,6,9,1,4,3,5,4,1,4,2,6], lines: [236, 255], notes: [['M: $6,282.00', 228], ['A: $6,429.12', 247]] }), 1],
  ['11. Debts', bars({ left: 52, ticks: seq(0, 20, 2), labels: ['2K', ...seq(2200, 4000, 200)], start: 115, pitch: 28, values: [5,4,9,4,5,5,11,4,4,9], lines: [268.8], notes: [['A: $3,068.97', 261], ['M: $3,126.00', 285]] }), 1],
  ['12. Credit card information', '<div class="amount"><p>Total Amount</p><strong>$213,570.00</strong></div>', 0],
  ['13. Preferred Method(s) of Contact', meters([['Phone', 56.67, 34], ['Postal Mail', 55, 33], ['Email', 38.33, 23]]), 1],
  ['14. Opportunities in your current job', bars({ left: 45.3, ticks: seq(0, 9, 1), labels: seq(0, 100, 10), start: 115, pitch: 28, values: [6,6,5,5,5,6,7,8,8,4], lines: [268.8], notes: [['A: 51%', 261], ['M: 54%', 285]] }), 1],
  ['15. You are a ...?', scale(), 1],
  ['16. Favorite cities?', '<div class="cities">' + ['RIO', 'DC', 'LA', 'NYC'].map((c, i) => `<div><i>${i + 1}</i>${c}</div>`).join('') + '</div>', 1],
  ['17. Rate this form', '<div class="rating"><span>Average</span><span>2.6 out of 5 stars</span></div>' + stars(), 1],
  ['18. Favorite soccer team', '<svg class="plot" viewBox="0 50 346 414"><use href="#crests" x="0" y="50" width="346" height="414"/></svg>', 1]
];
document.getElementById('cards').innerHTML = cards.map(([title, body, spark]) =>
  `<article class="card"><div class="card-head"><div>${title}</div><div>Answered: <b>60</b></div></div><div class="card-body">${body}</div><div class="card-foot">${spark ? '<span class="foot-btn spark"><svg viewBox="0 0 26 11"><use href="#i-spark"/></svg></span>' : ''}<span class="foot-btn"><svg viewBox="0 0 10 6"><use href="#i-down"/></svg></span></div></article>`).join('');
```
